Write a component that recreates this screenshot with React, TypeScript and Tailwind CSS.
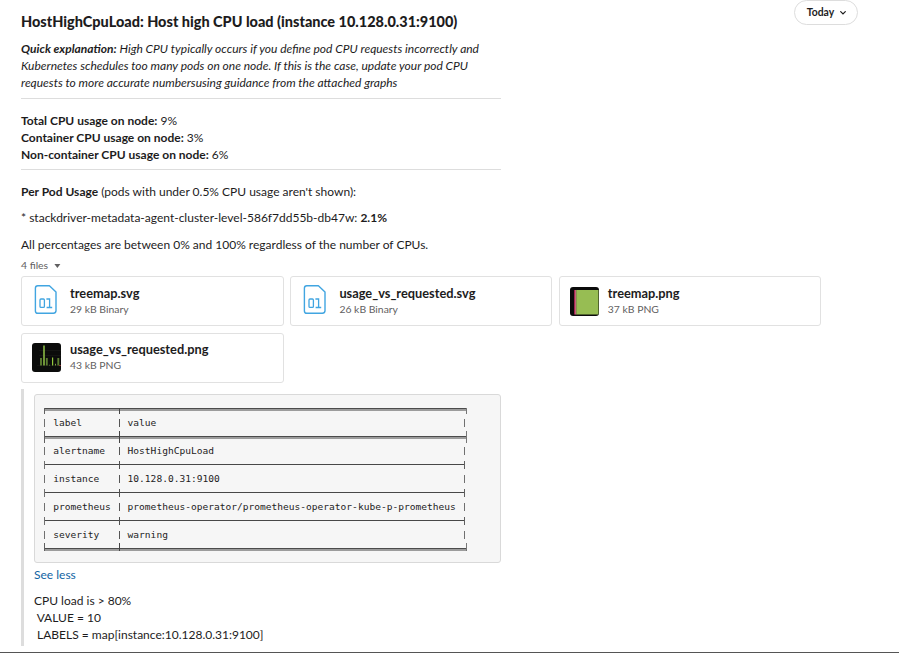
import React from "react";

function BinaryIcon() {
  return (
    <svg width="29" height="29" viewBox="0 0 29 29" fill="none" className="mb-[3px] shrink-0">
      <path
        d="M5.8 0.8H17.4L24 7V25.9A2.7 2.7 0 0 1 21.3 28.3H5.8A2.4 2.4 0 0 1 3.4 25.9V3.2A2.4 2.4 0 0 1 5.8 0.8Z"
        stroke="#41a5e1"
        strokeWidth="1.4"
        strokeLinejoin="round"
      />
      <rect x="8" y="14" width="4.4" height="8.4" rx="1" stroke="#41a5e1" strokeWidth="1.3" />
      <path d="M14.4 14H17.6V22.4M14.6 22.5H20.2" stroke="#41a5e1" strokeWidth="1.3" />
    </svg>
  );
}

function TreemapThumb() {
  return (
    <svg width="29" height="29" viewBox="0 0 29 29" className="shrink-0 rounded-[3px]">
      <rect width="29" height="29" fill="#0b0b0b" />
      <rect x="4" y="3" width="1.3" height="24.5" fill="#a32350" />
      <rect x="5.2" y="3" width="1.2" height="24.5" fill="#e07a90" />
      <rect x="6.3" y="3" width="22.2" height="24.5" fill="#97bd53" />
    </svg>
  );
}

function ChartThumb() {
  return (
    <svg width="29" height="29" viewBox="0 0 29 29" className="shrink-0 rounded-[3px]">
      <rect width="29" height="29" fill="#0b0c0b" />
      <path d="M5 22.5H29M7 12.5H29M7 7.5H29" stroke="#1b1d1a" strokeWidth="0.6" />
      <path d="M9 15V22.5M14.8 15V22.5M26.3 15V22.5" stroke="#5c7d31" strokeWidth="1.9" />
      <path d="M12 2.5V22.5" stroke="#759f3b" strokeWidth="1.9" />
      <path d="M20.6 14.5V22.5" stroke="#93c83c" strokeWidth="1.2" />
      <path d="M23.5 20.8V22.5M17.6 21.8V22.5" stroke="#7c9f45" strokeWidth="1" />
      <path d="M27 22.5H29" stroke="#a33c3c" strokeWidth="0.8" />
    </svg>
  );
}

function FileCard({ icon, name, meta }: { icon: React.ReactNode; name: string; meta: string }) {
  return (
    <div className="flex h-[50px] items-center gap-[9px] rounded-[3px] border border-[#e1e1e1] pl-[10px]">
      {icon}
      <div className="pb-px">
        <div className="h-[17px] text-[12.8px] leading-[16px] font-bold">{name}</div>
        <div className="h-[15px] text-[10.4px] leading-[15px] text-[#616061]">{meta}</div>
      </div>
    </div>
  );
}

const ruleSpan = {
  top: { y: 6, height: 6 },
  mid: { y: 1, height: 12 },
  bottom: { y: 1, height: 8 },
};

function DoubleRule({ kind }: { kind: "top" | "mid" | "bottom" }) {
  const { y, height } = ruleSpan[kind];
  return (
    <svg width="426" height="14" viewBox="0 0 426 14" className="block" shapeRendering="crispEdges">
      <rect x="2" y="6" width="423" height="3" fill="#9c9c9c" />
      <rect x="2" y="6" width="423" height="1" fill="#4c4c4c" />
      <rect x="2" y={y} width="1" height={height} fill="#606060" />
      <rect x="77" y={y} width="1" height={height} fill="#444444" />
      <rect x="424" y={y} width="1" height={height} fill="#777777" />
    </svg>
  );
}

function SingleRule() {
  return (
    <svg width="426" height="14" viewBox="0 0 426 14" className="block" shapeRendering="crispEdges">
      <rect x="2" y="6" width="421" height="1" fill="#484848" />
      <rect x="2" y="3" width="1" height="8" fill="#707070" />
      <rect x="77" y="3" width="1" height="8" fill="#505050" />
      <rect x="422" y="3" width="1" height="8" fill="#606060" />
    </svg>
  );
}

function Row({ label, value }: { label: string; value: string }) {
  return (
    <div className="flex h-[14px] items-center pl-[2px] leading-[14px] whitespace-nowrap">
      <span className="h-[8px] w-px bg-[#707070]" />
      <span className="w-[74px] pl-[8.2px]">{label}</span>
      <span className="h-[8px] w-px bg-[#555555]" />
      <span className="w-[344px] pl-[7.6px]">{value}</span>
      <span className="h-[8px] w-px bg-[#707070]" />
    </div>
  );
}

export default function App() {
  return (
    <div className="flex h-[653px] w-[899px] flex-col overflow-hidden border-b border-[#555555] bg-white pl-[21px] font-['Lato',sans-serif] text-[12px] leading-[17px] text-[#1d1c1d]">
      <div className="flex h-[40px] justify-between">
        <h1 className="pt-[13px] text-[14.47px] leading-[18px] font-black whitespace-nowrap">
          HostHighCpuLoad: Host high CPU load (instance 10.128.0.31:9100)
        </h1>
        <button className="mr-[41px] flex h-[25px] w-[64px] items-center justify-center gap-[6px] rounded-full border border-[#dddddd] pl-px text-[10.4px] font-bold">
          Today
          <svg width="6" height="4" viewBox="0 0 6 4" fill="none">
            <path d="M0.7 0.7L3 3L5.3 0.7" stroke="#1d1c1d" strokeWidth="1.2" strokeLinecap="round" />
          </svg>
        </button>
      </div>

      <div className="w-[480px] border-b border-[#dddddd] pb-[7px] italic whitespace-nowrap">
        <div><b>Quick explanation:</b> High CPU typically occurs if you define pod CPU requests incorrectly and</div>
        <div>Kubernetes schedules too many pods on one node. If this is the case, update your pod CPU</div>
        <div>requests to more accurate numbersusing guidance from the attached graphs</div>
      </div>

      <div className="mt-[13px] w-[480px] border-b border-[#dddddd] pb-[6px]">
        <div><b>Total CPU usage on node:</b> 9%</div>
        <div><b>Container CPU usage on node:</b> 3%</div>
        <div><b>Non-container CPU usage on node:</b> 6%</div>
      </div>

      <div className="mt-[13px]"><b>Per Pod Usage</b> (pods with under 0.5% CPU usage aren't shown):</div>
      <div className="mt-[9px]">* stackdriver-metadata-agent-cluster-level-586f7dd55b-db47w: <b>2.1%</b></div>
      <div className="mt-[10px]">All percentages are between 0% and 100% regardless of the number of CPUs.</div>

      <div className="mt-[5px] flex h-[15px] items-center gap-[6px] text-[10.4px] leading-[15px] text-[#616061]">
        4 files
        <svg width="7" height="4" viewBox="0 0 7 4"><path d="M0.4 0H6.4L3.4 3.9Z" fill="#616061" /></svg>
      </div>

      <div className="mt-[3px] grid grid-cols-[263px_262px_262px] gap-x-[6.4px] gap-y-[6.6px]">
        <FileCard icon={<BinaryIcon />} name="treemap.svg" meta="29 kB Binary" />
        <FileCard icon={<BinaryIcon />} name="usage_vs_requested.svg" meta="26 kB Binary" />
        <FileCard icon={<TreemapThumb />} name="treemap.png" meta="37 kB PNG" />
        <FileCard icon={<ChartThumb />} name="usage_vs_requested.png" meta="43 kB PNG" />
      </div>

      <div className="mt-[6.4px] h-[257px] w-[480px] border-l-3 border-[#dddddd] pt-[5px] pl-[10px]">
        <div className="h-[169px] w-[467px] rounded-[3px] border border-[#d9d9d9] bg-[#f6f6f6] pt-[7px] pl-[7px] font-['DejaVu_Sans_Mono',monospace] text-[9.57px]">
          <DoubleRule kind="top" />
          <Row label="label" value="value" />
          <DoubleRule kind="mid" />
          <Row label="alertname" value="HostHighCpuLoad" />
          <SingleRule />
          <Row label="instance" value="10.128.0.31:9100" />
          <SingleRule />
          <Row label="prometheus" value="prometheus-operator/prometheus-operator-kube-p-prometheus" />
          <SingleRule />
          <Row label="severity" value="warning" />
          <DoubleRule kind="bottom" />
        </div>
        <div className="mt-[3px] text-[#1264a3]">See less</div>
        <div className="mt-[9px] whitespace-pre">CPU load is &gt; 80%</div>
        <div className="whitespace-pre"> VALUE = 10</div>
        <div className="whitespace-pre"> LABELS = map[instance:10.128.0.31:9100]</div>
      </div>
    </div>
  );
}
